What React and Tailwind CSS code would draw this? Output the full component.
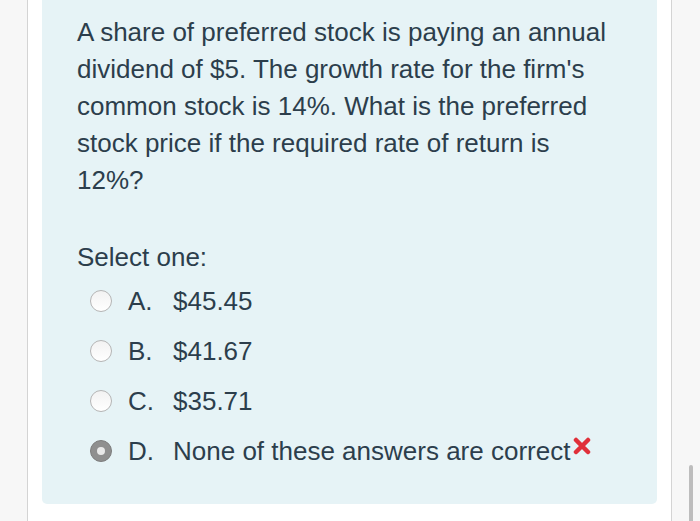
import React from 'react';

const options = [
  { letter: 'A.', text: '$45.45' },
  { letter: 'B.', text: '$41.67' },
  { letter: 'C.', text: '$35.71' },
  { letter: 'D.', text: 'None of these answers are correct', checked: true, wrong: true },
];

const Radio = ({ checked }) =>
  checked ? (
    <span className="w-[22px] h-[22px] rounded-full bg-[#8f8f8f] border border-[#7d7d7d] flex items-center justify-center shrink-0">
      <span className="w-[8px] h-[8px] rounded-full bg-[#e9e9e9]" />
    </span>
  ) : (
    <span className="w-[22px] h-[22px] rounded-full border border-[#b5b5b5] bg-gradient-to-b from-[#f2f2f2] to-[#ffffff] shrink-0" />
  );

export default function App() {
  return (
    <div
      className="w-[700px] h-[521px] bg-[#f7f7f7] flex overflow-hidden text-[#2c3e4c]"
      style={{ fontFamily: '"Liberation Sans", Arial, sans-serif' }}
    >
      <div className="w-[27px] shrink-0" />
      <div className="w-[645px] shrink-0 bg-white border-x border-[#d4d4d4] px-[14px]">
        <div className="bg-[#e6f3f6] rounded-b-[5px] h-[504px] pl-[35px] pr-[10px] pt-[14px]">
          <p className="text-[26px] leading-[37px] whitespace-nowrap">
            A share of preferred stock is paying an annual
            <br />
            dividend of $5. The growth rate for the firm's
            <br />
            common stock is 14%. What is the preferred
            <br />
            stock price if the required rate of return is
            <br />
            12%?
          </p>
          <div className="mt-[40px] text-[26px] leading-[37px]">Select one:</div>
          <div className="flex flex-col">
            {options.map((o) => (
              <div key={o.letter} className="h-[50px] flex items-center pl-[13px]">
                <Radio checked={o.checked} />
                <span className="ml-[16px] w-[45px] text-[26px]">{o.letter}</span>
                <span className="text-[26px]">{o.text}</span>
                {o.wrong && (
                  <svg width="18" height="18" viewBox="0 0 18 18" className="ml-[3px] -mt-[10px]">
                    <path d="M3 3 L15 15 M15 3 L3 15" stroke="#e0303a" strokeWidth="4.5" strokeLinecap="round" />
                  </svg>
                )}
              </div>
            ))}
          </div>
        </div>
      </div>
      <div className="flex-1 relative">
        <div className="absolute left-[17px] top-[465px] w-[4px] h-[60px] rounded-full bg-[#bdbdbd]" />
      </div>
    </div>
  );
}
